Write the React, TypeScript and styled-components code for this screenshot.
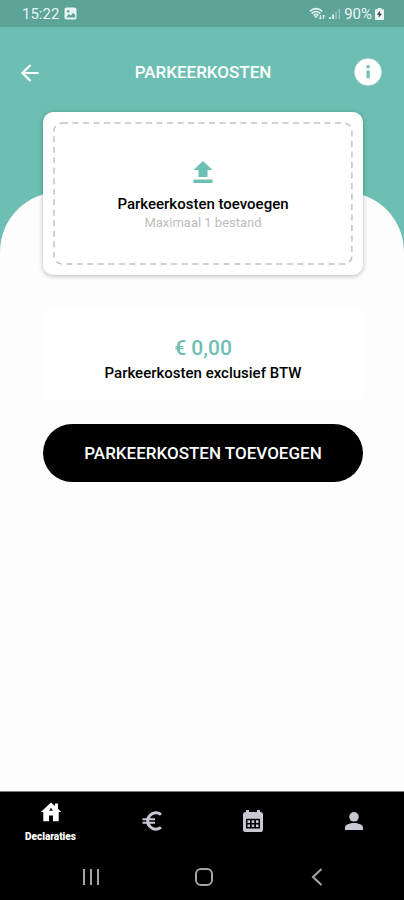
import React from "react";
import styled, { createGlobalStyle } from "styled-components";

const TEAL = "#6cbfb2";

const GlobalStyle = createGlobalStyle`
  *, *::before, *::after { box-sizing: border-box; }
  body { margin: 0; font-family: Roboto, sans-serif; background: #000; }
  button { font: inherit; border: 0; margin: 0; padding: 0; background: none; cursor: pointer; }
  svg { display: block; }
`;

const Screen = styled.div`
  display: flex;
  flex-direction: column;
  min-height: 100vh;
  background: ${TEAL};
`;

const StatusBar = styled.div`
  display: flex;
  align-items: center;
  justify-content: space-between;
  height: 27px;
  padding: 0 20px 0 22px;
  background: #5ba497;
  color: #eaf5f3;
  font-size: 15px;
  line-height: 20px;
`;

const StatusGroup = styled.div<{ $gap: number }>`
  display: flex;
  align-items: center;
  gap: ${(p) => p.$gap}px;
`;

const Header = styled.header`
  display: grid;
  grid-template-columns: 36px 1fr 28px;
  align-items: center;
  height: 85px;
  padding: 5px 22px 0 16px;
  color: #fff;
`;

const Title = styled.h1`
  margin: 0;
  text-align: center;
  font-size: 17px;
  line-height: 24px;
  font-weight: 500;
`;

const IconButton = styled.button`
  display: grid;
  place-items: center;
  width: 28px;
  height: 28px;
  color: inherit;
`;

const Sheet = styled.main`
  display: flex;
  flex-direction: column;
  flex: 1;
  margin-top: 80px;
  padding: 0 41px 0 43px;
  background: #fdfdfd;
  border-radius: 60px 60px 0 0;
`;

const UploadCard = styled.button`
  position: relative;
  display: flex;
  flex-direction: column;
  align-items: center;
  height: 163px;
  margin-top: -80px;
  padding-top: 48px;
  border-radius: 10px;
  background: #fff;
  box-shadow: 0 1px 5px rgba(0, 0, 0, 0.28);
`;

const DashedOutline = styled.svg`
  position: absolute;
  inset: 10px;
  width: calc(100% - 20px);
  height: calc(100% - 20px);
  overflow: visible;
`;

const Label = styled.span`
  font-size: 15px;
  line-height: 22px;
  font-weight: 500;
  color: #000;
`;

const UploadLabel = styled(Label)`
  margin-top: 9px;
`;

const Hint = styled.span`
  font-size: 13px;
  line-height: 16px;
  color: #bdbdbd;
`;

const Summary = styled.section`
  display: flex;
  flex-direction: column;
  align-items: center;
  height: 92px;
  margin-top: 33px;
  padding-top: 26px;
  border-radius: 8px;
  background: #fff;
`;

const Amount = styled.strong`
  font-size: 21px;
  line-height: 28px;
  font-weight: 500;
  color: ${TEAL};
`;

const PrimaryButton = styled.button`
  height: 58px;
  margin-top: 24px;
  border-radius: 29px;
  background: #000;
  color: #fff;
  font-size: 17px;
  line-height: 24px;
  font-weight: 500;
`;

const TabBar = styled.nav`
  display: grid;
  grid-template-columns: repeat(4, 1fr);
  height: 62px;
  padding-bottom: 3px;
  border-top: 1px solid #777;
  background: #000;
`;

const Tab = styled.button<{ $active?: boolean }>`
  display: flex;
  flex-direction: column;
  align-items: center;
  justify-content: center;
  gap: 8px;
  color: ${(p) => (p.$active ? "#fff" : "#c9c7d4")};
  font-size: 10px;
  line-height: 14px;
  font-weight: 900;
  padding-top: ${(p) => (p.$active ? 4 : 0)}px;
`;

const SystemBar = styled.div`
  display: flex;
  align-items: center;
  justify-content: space-around;
  height: 47px;
  padding: 0 30px 0 34px;
  background: #000;
  color: #a5a5a5;
`;

function PictureIcon() {
  return (
    <svg width="13" height="13" viewBox="0 0 13 13" aria-hidden="true">
      <rect x="0.5" y="0.5" width="12" height="12" rx="2" fill="currentColor" />
      <circle cx="4.2" cy="4.2" r="1.3" fill="#5ba497" />
      <path d="M2 10.5 4.8 7l1.8 1.8 2.5-3 2.2 2.5v2.2z" fill="#5ba497" />
    </svg>
  );
}

function WifiIcon() {
  return (
    <svg width="17" height="14" viewBox="0 0 17 14" fill="none" stroke="currentColor" aria-hidden="true">
      <path d="M.8 4.2Q7 -1 13.2 4.2M2.6 6.4Q7 2.6 11.4 6.4M4.6 8.4Q7 6.4 9.4 8.4" strokeWidth="1.5" />
      <path d="M5.6 9.4h2.8L7 11z" fill="currentColor" strokeWidth=".5" />
      <path d="M11.3 8v4m-1.4-1.4 1.4 1.6 1.3-1.6M14.6 12V8m-1.4 1.5L14.6 8 16 9.5" strokeWidth="1" />
    </svg>
  );
}

function SignalIcon() {
  return (
    <svg width="12" height="13" viewBox="0 0 12 13" fill="currentColor" aria-hidden="true">
      <path d="M0 10h1.8v2H0zM3.2 7.5H5V12H3.2z" />
      <path d="M6.4 4.5h1.4V12H6.4zM9.6 2H11v10H9.6z" opacity=".45" />
    </svg>
  );
}

function BatteryIcon() {
  return (
    <svg width="9" height="12" viewBox="0 0 9 12" aria-hidden="true">
      <path d="M2.7 0h3.6v1.3H8a1 1 0 0 1 1 1V11a1 1 0 0 1-1 1H1a1 1 0 0 1-1-1V2.3a1 1 0 0 1 1-1h1.7z" fill="currentColor" />
      <path d="M5 2.8 1.9 6.7h2L3.6 9.8l3.3-4.1H4.8z" fill="#34423f" />
    </svg>
  );
}

function ArrowLeftIcon() {
  return (
    <svg width="20" height="20" viewBox="0 0 20 20" fill="none" stroke="currentColor" strokeWidth="2.2" aria-hidden="true">
      <path d="M18.5 11H3M10.5 3 2.5 11l8 8" />
    </svg>
  );
}

function InfoIcon() {
  return (
    <svg width="28" height="28" viewBox="0 0 28 28" aria-hidden="true">
      <circle cx="14" cy="14" r="13.5" fill="currentColor" />
      <path d="M12.5 7.3h3.2v2.9h-3.2zM12.5 12.5h3.2v7.7h-3.2z" fill={TEAL} />
    </svg>
  );
}

function UploadIcon() {
  return (
    <svg width="20" height="24" viewBox="0 0 20 24" fill={TEAL} aria-hidden="true">
      <path d="M10 1 19.5 10h-5v7h-9v-7h-5zM.5 19.5h19V23H.5z" />
    </svg>
  );
}

function HouseIcon() {
  return (
    <svg width="22" height="20" viewBox="0 0 22 20" fill="currentColor" aria-hidden="true">
      <path
        fillRule="evenodd"
        d="M11 .5 15 4V1.5h3v5.2L21.2 10H18.7v9.2H13v-5.7H9v5.7H3.3V10H.8zM11 5.7 9.2 8.7h3.6z"
      />
    </svg>
  );
}

function EuroIcon() {
  return (
    <svg width="22" height="22" viewBox="0 0 22 22" fill="none" stroke="currentColor" aria-hidden="true">
      <path d="M20 4.6A8.2 8.2 0 1 0 20 17.4" strokeWidth="3" />
      <path d="M1.5 9.2H14M1.5 12.8H14" strokeWidth="2" />
    </svg>
  );
}

function CalendarIcon() {
  return (
    <svg width="22" height="24" viewBox="0 0 22 24" aria-hidden="true">
      <path
        d="M4 1h3v2h8V1h3v2h.5A2.5 2.5 0 0 1 21 5.5v15a2.5 2.5 0 0 1-2.5 2.5h-15A2.5 2.5 0 0 1 1 20.5v-15A2.5 2.5 0 0 1 3.500 3H4z"
        fill="currentColor"
      />
      <path d="M4 9.8h14v9.7H4z" fill="#000" />
      <path
        d="M5.5 11.3h2.5v2.6H5.500zM9.750 11.3h2.500v2.6h-2.500zM14 11.3h2.500v2.6H14zM5.500 15.4h2.500v2.6H5.500zM9.750 15.4h2.500v2.6h-2.500zM14 15.4h2.500v2.6H14z"
        fill="currentColor"
      />
    </svg>
  );
}

function PersonIcon() {
  return (
    <svg width="20" height="20" viewBox="0 0 20 20" fill="currentColor" aria-hidden="true">
      <circle cx="10" cy="5.8" r="4.8" />
      <path d="M1 19v-2.5c0-3 5-4.5 9-4.5s9 1.5 9 4.5V19z" />
    </svg>
  );
}

function RecentsIcon() {
  return (
    <svg width="18" height="18" viewBox="0 0 18 18" fill="none" stroke="currentColor" strokeWidth="2" aria-hidden="true">
      <path d="M2 1v16M9 1v16M16 1v16" />
    </svg>
  );
}

function HomeIcon() {
  return (
    <svg width="18" height="18" viewBox="0 0 18 18" fill="none" stroke="currentColor" strokeWidth="2" aria-hidden="true">
      <rect x="1" y="1" width="16" height="16" rx="5" />
    </svg>
  );
}

function BackIcon() {
  return (
    <svg width="18" height="18" viewBox="0 0 18 18" fill="none" stroke="currentColor" strokeWidth="2" aria-hidden="true">
      <path d="M13.5 1 5 9l8.5 8" />
    </svg>
  );
}

export default function App() {
  return (
    <Screen>
      <GlobalStyle />
      <StatusBar>
        <StatusGroup $gap={5}>
          <span>15:22</span>
          <PictureIcon />
        </StatusGroup>
        <StatusGroup $gap={3}>
          <WifiIcon />
          <SignalIcon />
          <span>90%</span>
          <BatteryIcon />
        </StatusGroup>
      </StatusBar>

      <Header>
        <IconButton type="button" aria-label="Terug">
          <ArrowLeftIcon />
        </IconButton>
        <Title>PARKEERKOSTEN</Title>
        <IconButton type="button" aria-label="Informatie">
          <InfoIcon />
        </IconButton>
      </Header>

      <Sheet>
        <UploadCard type="button">
          <DashedOutline aria-hidden="true">
            <rect
              x="1"
              y="1"
              width="99.3%"
              height="98.6%"
              rx="8"
              fill="none"
              stroke="#c2c2c2"
              strokeWidth="1.5"
              strokeDasharray="6 4.5"
            />
          </DashedOutline>
          <UploadIcon />
          <UploadLabel>Parkeerkosten toevoegen</UploadLabel>
          <Hint>Maximaal 1 bestand</Hint>
        </UploadCard>

        <Summary>
          <Amount>€ 0,00</Amount>
          <Label>Parkeerkosten exclusief BTW</Label>
        </Summary>

        <PrimaryButton type="button">PARKEERKOSTEN TOEVOEGEN</PrimaryButton>
      </Sheet>

      <TabBar aria-label="Hoofdnavigatie">
        <Tab type="button" $active aria-current="page">
          <HouseIcon />
          Declaraties
        </Tab>
        <Tab type="button" aria-label="Vergoedingen">
          <EuroIcon />
        </Tab>
        <Tab type="button" aria-label="Agenda">
          <CalendarIcon />
        </Tab>
        <Tab type="button" aria-label="Profiel">
          <PersonIcon />
        </Tab>
      </TabBar>

      <SystemBar>
        <IconButton type="button" aria-label="Recente apps">
          <RecentsIcon />
        </IconButton>
        <IconButton type="button" aria-label="Startscherm">
          <HomeIcon />
        </IconButton>
        <IconButton type="button" aria-label="Vorige">
          <BackIcon />
        </IconButton>
      </SystemBar>
    </Screen>
  );
}
